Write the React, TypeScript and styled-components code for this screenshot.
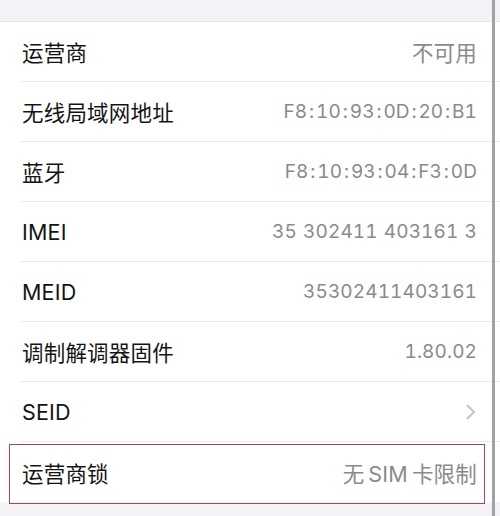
import React from "react";
import styled, { createGlobalStyle } from "styled-components";

const Global = createGlobalStyle`
  html, body { margin: 0; padding: 0; background: #f2f2f7; }
  body { width: 500px; height: 516px; overflow: hidden; }
`;

const Page = styled.div`
  position: relative;
  width: 500px;
  height: 516px;
  background: #f2f2f7;
  font-family: Inter, "Noto Sans CJK SC", sans-serif;
`;

const TopBand = styled.div`
  height: 21px;
  border-bottom: 1px solid #e4e4e9;
`;

const List = styled.div`
  background: #ffffff;
  display: flex;
  flex-direction: column;
`;

const Row = styled.div<{ $last?: boolean }>`
  position: relative;
  height: 60px;
  margin-left: 21px;
  padding-right: 23px;
  display: flex;
  align-items: center;
  justify-content: space-between;
  box-sizing: border-box;
  border-bottom: ${(p) => (p.$last ? "none" : "1.5px solid #e8e8ec")};
`;

const Label = styled.span`
  padding-left: 1px;
  font-size: 21.5px;
  color: #141414;
  font-family: Inter, "Noto Sans CJK SC", sans-serif;
  letter-spacing: 0.2px;
`;

const Value = styled.span<{ $cjk?: boolean }>`
  font-size: ${(p) => (p.$cjk ? "21.5px" : "19px")};
  color: #8a8a8e;
  font-family: Inter, "Noto Sans CJK SC", sans-serif;
  font-feature-settings: "tnum" 1;
  letter-spacing: ${(p) => (p.$cjk ? "0.2px" : "0.1px")};
  word-spacing: ${(p) => (p.$cjk ? "-2px" : "1px")};
  white-space: pre;
`;

const Colon = styled.span`
  padding: 0 1.8px;
`;

const Highlight = styled.div`
  position: absolute;
  left: -12px;
  right: 15px;
  top: 2px;
  bottom: -2px;
  border: 1.5px solid #a8474c;
  pointer-events: none;
`;

const ScrollBar = styled.div`
  position: absolute;
  top: 0;
  bottom: 0;
  left: 492px;
  width: 3px;
  background: #a2a2a4;
`;

const Chevron = () => (
  <svg width="10" height="16" viewBox="0 0 10 16" style={{ marginRight: 1 }}>
    <path d="M1.5 1.5 L8 8 L1.5 14.5" fill="none" stroke="#c5c5c9" strokeWidth="2" strokeLinecap="round" strokeLinejoin="round" />
  </svg>
);

const renderValue = (v: string) =>
  v.split(/(:)/).map((part, i) => (part === ":" ? <Colon key={i}>:</Colon> : <React.Fragment key={i}>{part}</React.Fragment>));

const rows: { label: string; value?: string; cjk?: boolean; chevron?: boolean }[] = [
  { label: "运营商", value: "不可用", cjk: true },
  { label: "无线局域网地址", value: "F8:10:93:0D:20:B1" },
  { label: "蓝牙", value: "F8:10:93:04:F3:0D" },
  { label: "IMEI", value: "35 302411 403161 3" },
  { label: "MEID", value: "35302411403161" },
  { label: "调制解调器固件", value: "1.80.02" },
  { label: "SEID", chevron: true },
];

export default function App() {
  return (
    <Page>
      <Global />
      <TopBand />
      <List>
        {rows.map((r) => (
          <Row key={r.label}>
            <Label>{r.label}</Label>
            {r.chevron ? <Chevron /> : <Value $cjk={r.cjk}>{renderValue(r.value || "")}</Value>}
          </Row>
        ))}
        <Row $last>
          <Label>运营商锁</Label>
          <Value $cjk>无 SIM 卡限制</Value>
          <Highlight />
        </Row>
      </List>
      <ScrollBar />
    </Page>
  );
}
